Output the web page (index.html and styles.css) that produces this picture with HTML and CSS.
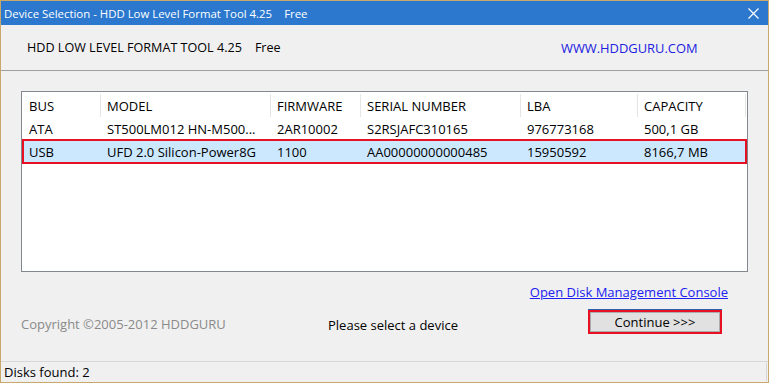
FILE: index.html
```html
<!DOCTYPE html>
<html>
<head>
<meta charset="utf-8">
<link rel="stylesheet" href="styles.css">
</head>
<body>
<div class="window">
  <div class="titlebar">
    <span class="title"><span>Device Selection - HDD Low Level Format Tool 4.25</span><span class="free">Free</span></span>
    <svg class="close" width="11" height="11" viewBox="0 0 11 11"><path d="M0.5 0.5L10.5 10.5M10.5 0.5L0.5 10.5" stroke="#fff" stroke-width="1.2" fill="none"/></svg>
  </div>
  <div class="header">
    <span class="app"><span>HDD LOW LEVEL FORMAT TOOL 4.25</span><span class="free2">Free</span></span>
    <span class="site">WWW.HDDGURU.COM</span>
  </div>
  <div class="main">
    <div class="list">
      <div class="row head">
        <div class="c c1">BUS</div><div class="c c2">MODEL</div><div class="c c3">FIRMWARE</div><div class="c c4">SERIAL NUMBER</div><div class="c c5">LBA</div><div class="c c6">CAPACITY</div>
      </div>
      <div class="row">
        <div class="c c1">ATA</div><div class="c c2">ST500LM012 HN-M500...</div><div class="c c3">2AR10002</div><div class="c c4">S2RSJAFC310165</div><div class="c c5">976773168</div><div class="c c6">500,1 GB</div>
      </div>
      <div class="row sel">
        <div class="c c1">USB</div><div class="c c2">UFD 2.0 Silicon-Power8G</div><div class="c c3">1100</div><div class="c c4">AA00000000000485</div><div class="c c5">15950592</div><div class="c c6">8166,7 MB</div>
      </div>
    </div>
    <div class="linkrow"><a class="link">Open Disk Management Console</a></div>
    <div class="bottom">
      <span class="copy">Copyright ©2005-2012 HDDGURU</span>
      <span class="msg">Please select a device</span>
      <span class="btnwrap"><span class="btn">Continue &gt;&gt;&gt;</span></span>
    </div>
  </div>
  <div class="status"><span>Disks found: 2</span><span class="grip"></span></div>
</div>
</body>
</html>
```
FILE: styles.css
```css
* { box-sizing: border-box; }
html, body { margin: 0; padding: 0; }
body { font-family: "Open Sans", "Noto Sans", sans-serif; font-size: 13px; color: #000; background: #f0f0f0; }
.window { width: 769px; height: 383px; border: 1px solid #c8a86b; display: flex; flex-direction: column; background: #f0f0f0; }
.titlebar { height: 24px; background: #2b78ce; color: #fff; display: flex; align-items: center; justify-content: space-between; padding: 0 9px 0 3px; }
.title { font-size: 11.4px; white-space: nowrap; }
.free { margin-left: 12px; }
.close { display: block; }
.header { height: 46px; border-bottom: 1px solid #a0a0a0; display: flex; align-items: center; padding: 0 0 0 26px; }
.app { font-size: 12.6px; width: 534px; white-space: nowrap; }
.free2 { margin-left: 13px; }
.site { color: #2020e0; font-size: 12.9px; }
.main { flex: 1; padding: 20px 20px 0 20px; display: flex; flex-direction: column; }
.list { height: 181px; border: 1px solid #828790; background: #fff; padding: 1px; margin-bottom: 1px; }
.row { display: flex; height: 22px; align-items: center; }
.row.head { height: 25px; }
.c { padding-left: 6px; white-space: nowrap; overflow: hidden; }
.head .c { border-right: 1px solid #e5e5e5; height: 23px; display: flex; align-items: center; }
.c1 { width: 78px; }
.c2 { width: 170px; }
.c3 { width: 90px; }
.c4 { width: 160px; }
.c5 { width: 117px; }
.c6 { width: 108px; }
.row.sel { background: #cce8ff; outline: 2px solid #e81123; outline-offset: -1px; height: 23px; }
.linkrow { display: flex; justify-content: flex-end; padding: 10px 20px 0 0; height: 30px; }
.link { color: #2020f0; text-decoration: underline; }
.bottom { display: flex; align-items: center; height: 42px; }
.copy { color: #8a8a8a; width: 307px; }
.msg { width: 260px; padding-top: 2px; }
.btnwrap { display: inline-block; border: 2px solid #e81123; box-shadow: 0 -1px 0 #2b5fb0; width: 134px; height: 24px; margin-top: -5px; }
.btn { display: flex; align-items: center; justify-content: center; height: 100%; background: #e1e1e1; border: 1px solid #adadad; }
.status { height: 21px; border-top: 1px solid #d7d7d7; display: flex; align-items: center; justify-content: space-between; padding-left: 3px; }
.grip { width: 1px; height: 18px; background: #d7d7d7; margin-right: 1px; }
```
